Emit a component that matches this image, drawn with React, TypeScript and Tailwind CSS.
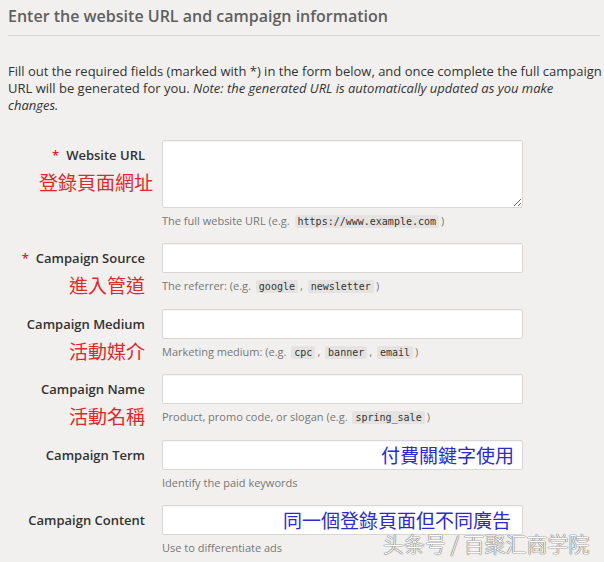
import React from "react";

const Code = ({ children }: { children: React.ReactNode }) => (
  <code className="mx-[2px] rounded-[2px] bg-[#e4e3e1] px-[3px] py-[1px] font-['DejaVu_Sans_Mono',monospace] text-[10px] text-[#333]">
    {children}
  </code>
);

type Row = {
  label: string;
  required?: boolean;
  zh?: string;
  help: React.ReactNode;
  textarea?: boolean;
  blue?: string;
  bluePr?: string;
  h: string;
};

const rows: Row[] = [
  {
    label: "Website URL",
    required: true,
    zh: "登錄頁面網址",
    textarea: true,
    h: "h-[103px]",
    help: (
      <>
        The full website URL (e.g. <Code>https://www.example.com</Code>)
      </>
    ),
  },
  {
    label: "Campaign Source",
    required: true,
    zh: "進入管道",
    h: "h-[66px]",
    help: (
      <>
        The referrer: (e.g. <Code>google</Code>, <Code>newsletter</Code>)
      </>
    ),
  },
  {
    label: "Campaign Medium",
    zh: "活動媒介",
    h: "h-[65px]",
    help: (
      <>
        Marketing medium: (e.g. <Code>cpc</Code>, <Code>banner</Code>, <Code>email</Code>)
      </>
    ),
  },
  {
    label: "Campaign Name",
    zh: "活動名稱",
    h: "h-[66px]",
    help: (
      <>
        Product, promo code, or slogan (e.g. <Code>spring_sale</Code>)
      </>
    ),
  },
  {
    label: "Campaign Term",
    h: "h-[65px]",
    blue: "付費關鍵字使用",
    bluePr: "pr-[9px]",
    help: <>Identify the paid keywords</>,
  },
  {
    label: "Campaign Content",
    h: "h-[57px]",
    blue: "同一個登錄頁面但不同廣告",
    bluePr: "pr-[12px]",
    help: <>Use to differentiate ads</>,
  },
];

export default function App() {
  return (
    <div className="relative h-[562px] w-[604px] overflow-hidden bg-[#f1f0ee] font-['Open_Sans','Noto_Sans_CJK_TC',sans-serif]">
      <div className="pl-2">
        <h2 className="mr-[4px] border-b border-[#d6d5d3] pt-[4px] pb-[7px] text-[16px] font-semibold leading-[24px] text-[#5f5f5f]">
          Enter the website URL and campaign information
        </h2>
        <p className="mt-[27px] text-[13px] leading-[17px] text-[#333]">
          Fill out the required fields (marked with *) in the form below, and once complete the full campaign URL
          will be generated for you.{" "}
          <em>Note: the generated URL is automatically updated as you make changes.</em>
        </p>
      </div>

      <div className="mt-[26px] flex flex-col">
        {rows.map((r) => (
          <div key={r.label} className={`flex ${r.h}`}>
            <div className="w-[145px] shrink-0 text-right">
              <div className="pt-[6px] text-[13px] font-semibold leading-[18px] text-[#333]">
                {r.required && <span className="mr-[7px] text-[#d9232e]">*</span>}
                {r.label}
              </div>
              {r.zh && (
                <div
                  className={`mt-[5px] whitespace-nowrap font-['Noto_Sans_CJK_TC',sans-serif] text-[19px] leading-[26px] text-[#e3262b] ${
                    r.textarea ? "mr-[-8px]" : ""
                  }`}
                >
                  {r.zh}
                </div>
              )}
            </div>
            <div className="ml-[17px] w-[361px] shrink-0">
              {r.textarea ? (
                <textarea className="block h-[68px] w-full rounded-[2px] border border-[#d8d7d5] bg-white shadow-[inset_0_1px_1px_rgba(0,0,0,0.04)] outline-none" />
              ) : (
                <div className="relative">
                  <input className="block h-[30px] w-full rounded-[2px] border border-[#d8d7d5] bg-white shadow-[inset_0_1px_1px_rgba(0,0,0,0.04)] outline-none" />
                  {r.blue && (
                    <div
                      className={`pointer-events-none absolute inset-0 flex items-center justify-end ${r.bluePr} font-['Noto_Sans_CJK_TC',sans-serif] text-[19px] leading-[26px] text-[#2a2ad2]`}
                    >
                      {r.blue}
                    </div>
                  )}
                </div>
              )}
              <div className="mt-[5px] whitespace-nowrap text-[11px] leading-[16px] text-[#777]">{r.help}</div>
            </div>
          </div>
        ))}
      </div>

      <div className="pointer-events-none absolute left-[383px] top-[530px] whitespace-nowrap font-['Noto_Sans_CJK_SC',sans-serif] text-[21px] font-light leading-[26px] text-white [text-shadow:0_0_1px_#6b6b6b,0_0_1px_#6b6b6b,0_0_1px_#6b6b6b]">
        头条号 / 百聚汇商学院
      </div>
    </div>
  );
}
